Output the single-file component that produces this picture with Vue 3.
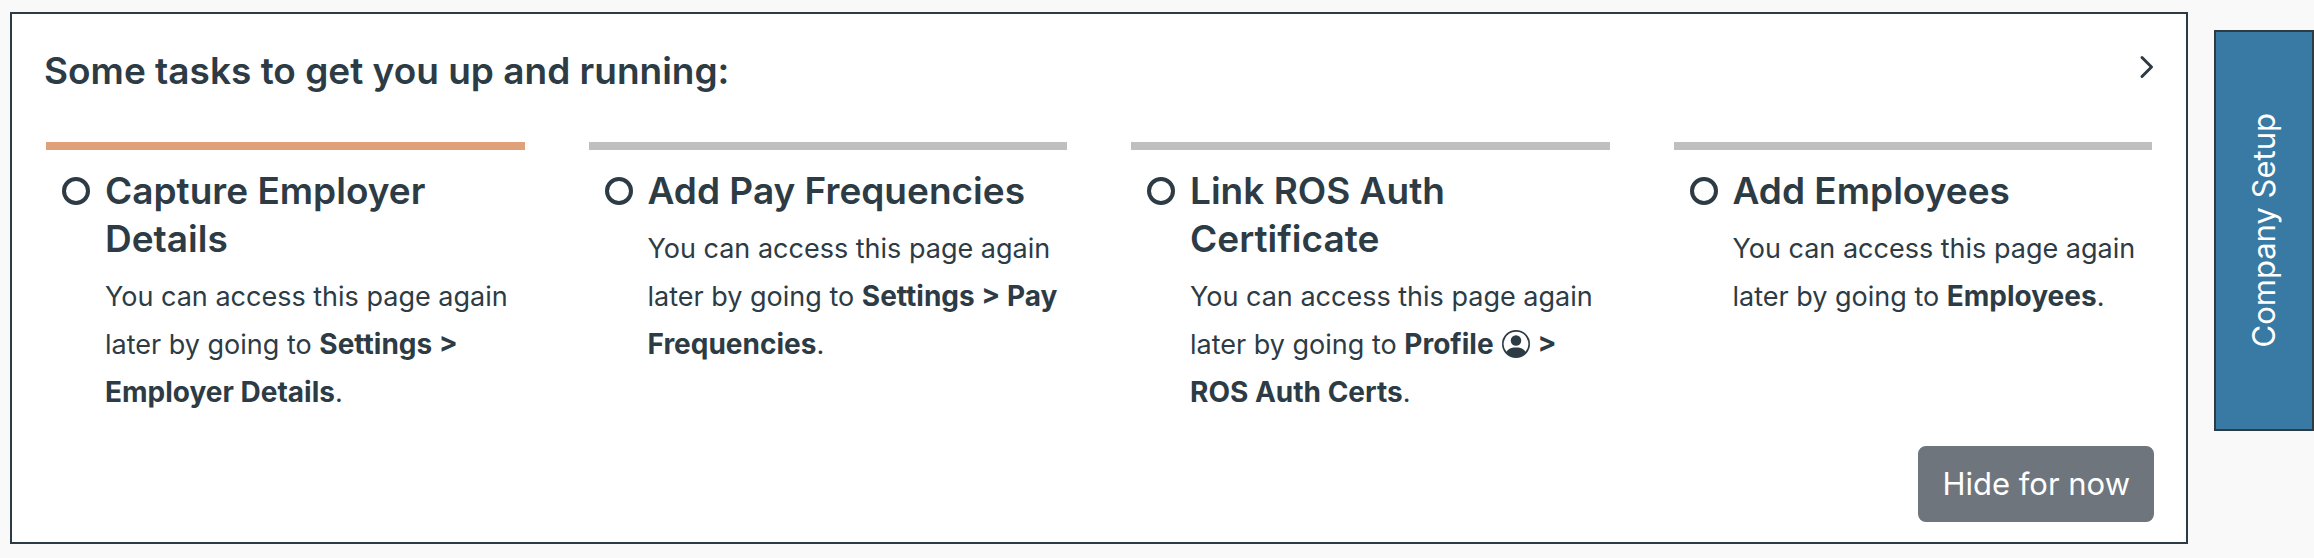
<template>
    <div class="setup" v-if="!hidden">
        <section class="panel" v-if="isOpen">
            <header class="panel-header">
                <h2>Some tasks to get you up and running:</h2>
                <button class="close-button" aria-label="Collapse" @click="toggle()">
                    <svg width="15" height="26" viewBox="0 0 15 26">
                        <path d="M3 3.5 12.5 13 3 22.5" />
                    </svg>
                </button>
            </header>

            <ul class="tasks">
                <li class="task" v-for="task in tasks" :key="task.title" :class="{ active: task.active }">
                    <svg class="circle" width="28" height="28" viewBox="0 0 28 28">
                        <circle cx="14" cy="14" r="12" />
                    </svg>
                    <div>
                        <h3>{{ task.title }}</h3>
                        <p>
                            You can access this page again later by going to
                            <strong>{{ task.menu }}<svg v-if="task.icon" class="person" width="28" height="28" viewBox="0 0 16 16">
                                <path d="M11 6a3 3 0 1 1-6 0 3 3 0 0 1 6 0z" />
                                <path fill-rule="evenodd" d="M0 8a8 8 0 1 1 16 0A8 8 0 0 1 0 8zm8-7a7 7 0 0 0-5.468 11.37C3.242 11.226 4.805 10 8 10s4.757 1.225 5.468 2.37A7 7 0 0 0 8 1z" />
                            </svg>{{ task.page }}</strong>.
                        </p>
                    </div>
                </li>
            </ul>

            <footer class="panel-footer">
                <button class="hide-button" @click="hide()">Hide for now</button>
            </footer>
        </section>

        <button class="tab-button" @click="toggle()"><span>Company Setup</span></button>
    </div>
</template>

<script setup>
import { ref } from 'vue';

// state
const isOpen = ref(true);
const hidden = ref(false);
const tasks = ref([
    { title: 'Capture Employer Details', menu: 'Settings > Employer Details', active: true },
    { title: 'Add Pay Frequencies', menu: 'Settings > Pay Frequencies' },
    { title: 'Link ROS Auth Certificate', menu: 'Profile', icon: true, page: '> ROS Auth Certs' },
    { title: 'Add Employees', menu: 'Employees' },
]);

// functions
function toggle() {
    isOpen.value = !isOpen.value;
}

function hide() {
    hidden.value = true;
}
</script>

<style>
body {
    margin: 0;
    background-color: #f9f9f9;
}
</style>

<style scoped>
.setup {
    --text: #2d3b45;
    display: flex;
    align-items: flex-start;
    justify-content: flex-end;
    gap: 26px;
    padding: 12px 0 14px 10px;
    color: var(--text);
    font-family: Inter, "Liberation Sans", sans-serif;
}

button {
    font-family: inherit;
    cursor: pointer;
}

h2,
h3 {
    margin: 0;
    font-size: 37px;
    font-weight: 600;
    line-height: 48px;
}

.panel {
    flex: 1;
    min-width: 0;
    padding: 33px 32px 20px;
    border: 2px solid var(--text);
    background-color: white;
}

.panel-header {
    display: flex;
    justify-content: space-between;
    align-items: flex-start;
}

.close-button {
    display: flex;
    padding: 7px 0;
    border: none;
    background: none;
}

.close-button path {
    fill: none;
    stroke: var(--text);
    stroke-width: 3;
    stroke-linecap: round;
    stroke-linejoin: round;
}

.tasks {
    display: grid;
    grid-template-columns: repeat(4, 1fr);
    gap: 64px;
    margin: 47px 2px 0;
    padding: 0;
    list-style: none;
}

.task {
    display: flex;
    align-items: flex-start;
    gap: 15px;
    padding: 17px 0 0 16px;
    border-top: 8px solid #bfbfbf;
}

.task.active {
    border-top-color: #e0a079;
}

.circle {
    flex: none;
    margin-top: 10px;
    fill: none;
    stroke: var(--text);
    stroke-width: 4;
}

.task p {
    margin: 10px 0 0;
    font-size: 27px;
    line-height: 48px;
}

.task strong {
    font-size: 28px;
    line-height: 1;
}

.person {
    margin: 0 8px;
    fill: var(--text);
    vertical-align: -4px;
}

.panel-footer {
    display: flex;
    justify-content: flex-end;
    margin-top: 29px;
}

.hide-button {
    padding: 12px 22px;
    border: 2px solid #6e757d;
    border-radius: 8px;
    background-color: #6e757d;
    color: white;
    font-size: 31px;
    line-height: 48px;
}

.tab-button {
    display: flex;
    flex: none;
    align-items: center;
    justify-content: center;
    width: 100px;
    margin-top: 18px;
    padding: 81px 0;
    border: 2px solid var(--text);
    background-color: #387aa3;
    color: white;
    font-size: 31px;
    line-height: 48px;
}

.tab-button span {
    writing-mode: vertical-rl;
    transform: rotate(180deg);
}
</style>
